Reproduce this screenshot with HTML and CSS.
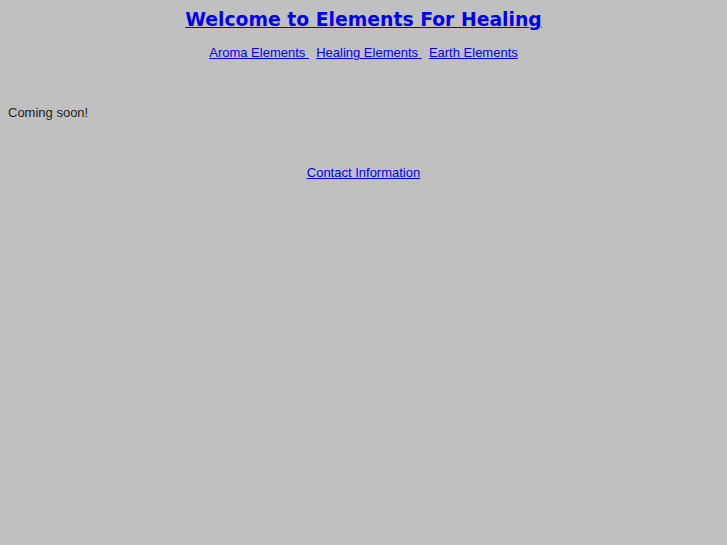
FILE: index.html
```html
<!DOCTYPE html>
<html>
<head>
<meta charset="utf-8">
<link rel="stylesheet" href="styles.css">
</head>
<body>
<div class="title"><a href="#">Welcome to Elements For Healing</a></div>
<div class="nav"><a href="#">Aroma Elements </a>&nbsp; <a href="#">Healing Elements </a>&nbsp; <a href="#">Earth Elements</a></div>
<p class="soon">Coming soon!</p>
<div class="contact"><a href="#">Contact Information</a></div>
</body>
</html>
```
FILE: styles.css
```css
html, body {
  background: #c0c0c0;
}
body {
  margin: 8px;
  font-family: "Liberation Sans", Arial, sans-serif;
  font-size: 13px;
  color: #222;
}
a {
  color: #0000ee;
}
.title {
  text-align: center;
  font-family: "DejaVu Sans", sans-serif;
  font-weight: bold;
  font-size: 18.8px;
  line-height: 22px;
  padding-top: 1px;
}
.nav {
  text-align: center;
  margin-top: 14px;
  line-height: 16px;
}
.soon {
  margin: 44px 0 0;
  line-height: 16px;
}
.contact {
  text-align: center;
  margin-top: 44px;
  line-height: 16px;
}
```
